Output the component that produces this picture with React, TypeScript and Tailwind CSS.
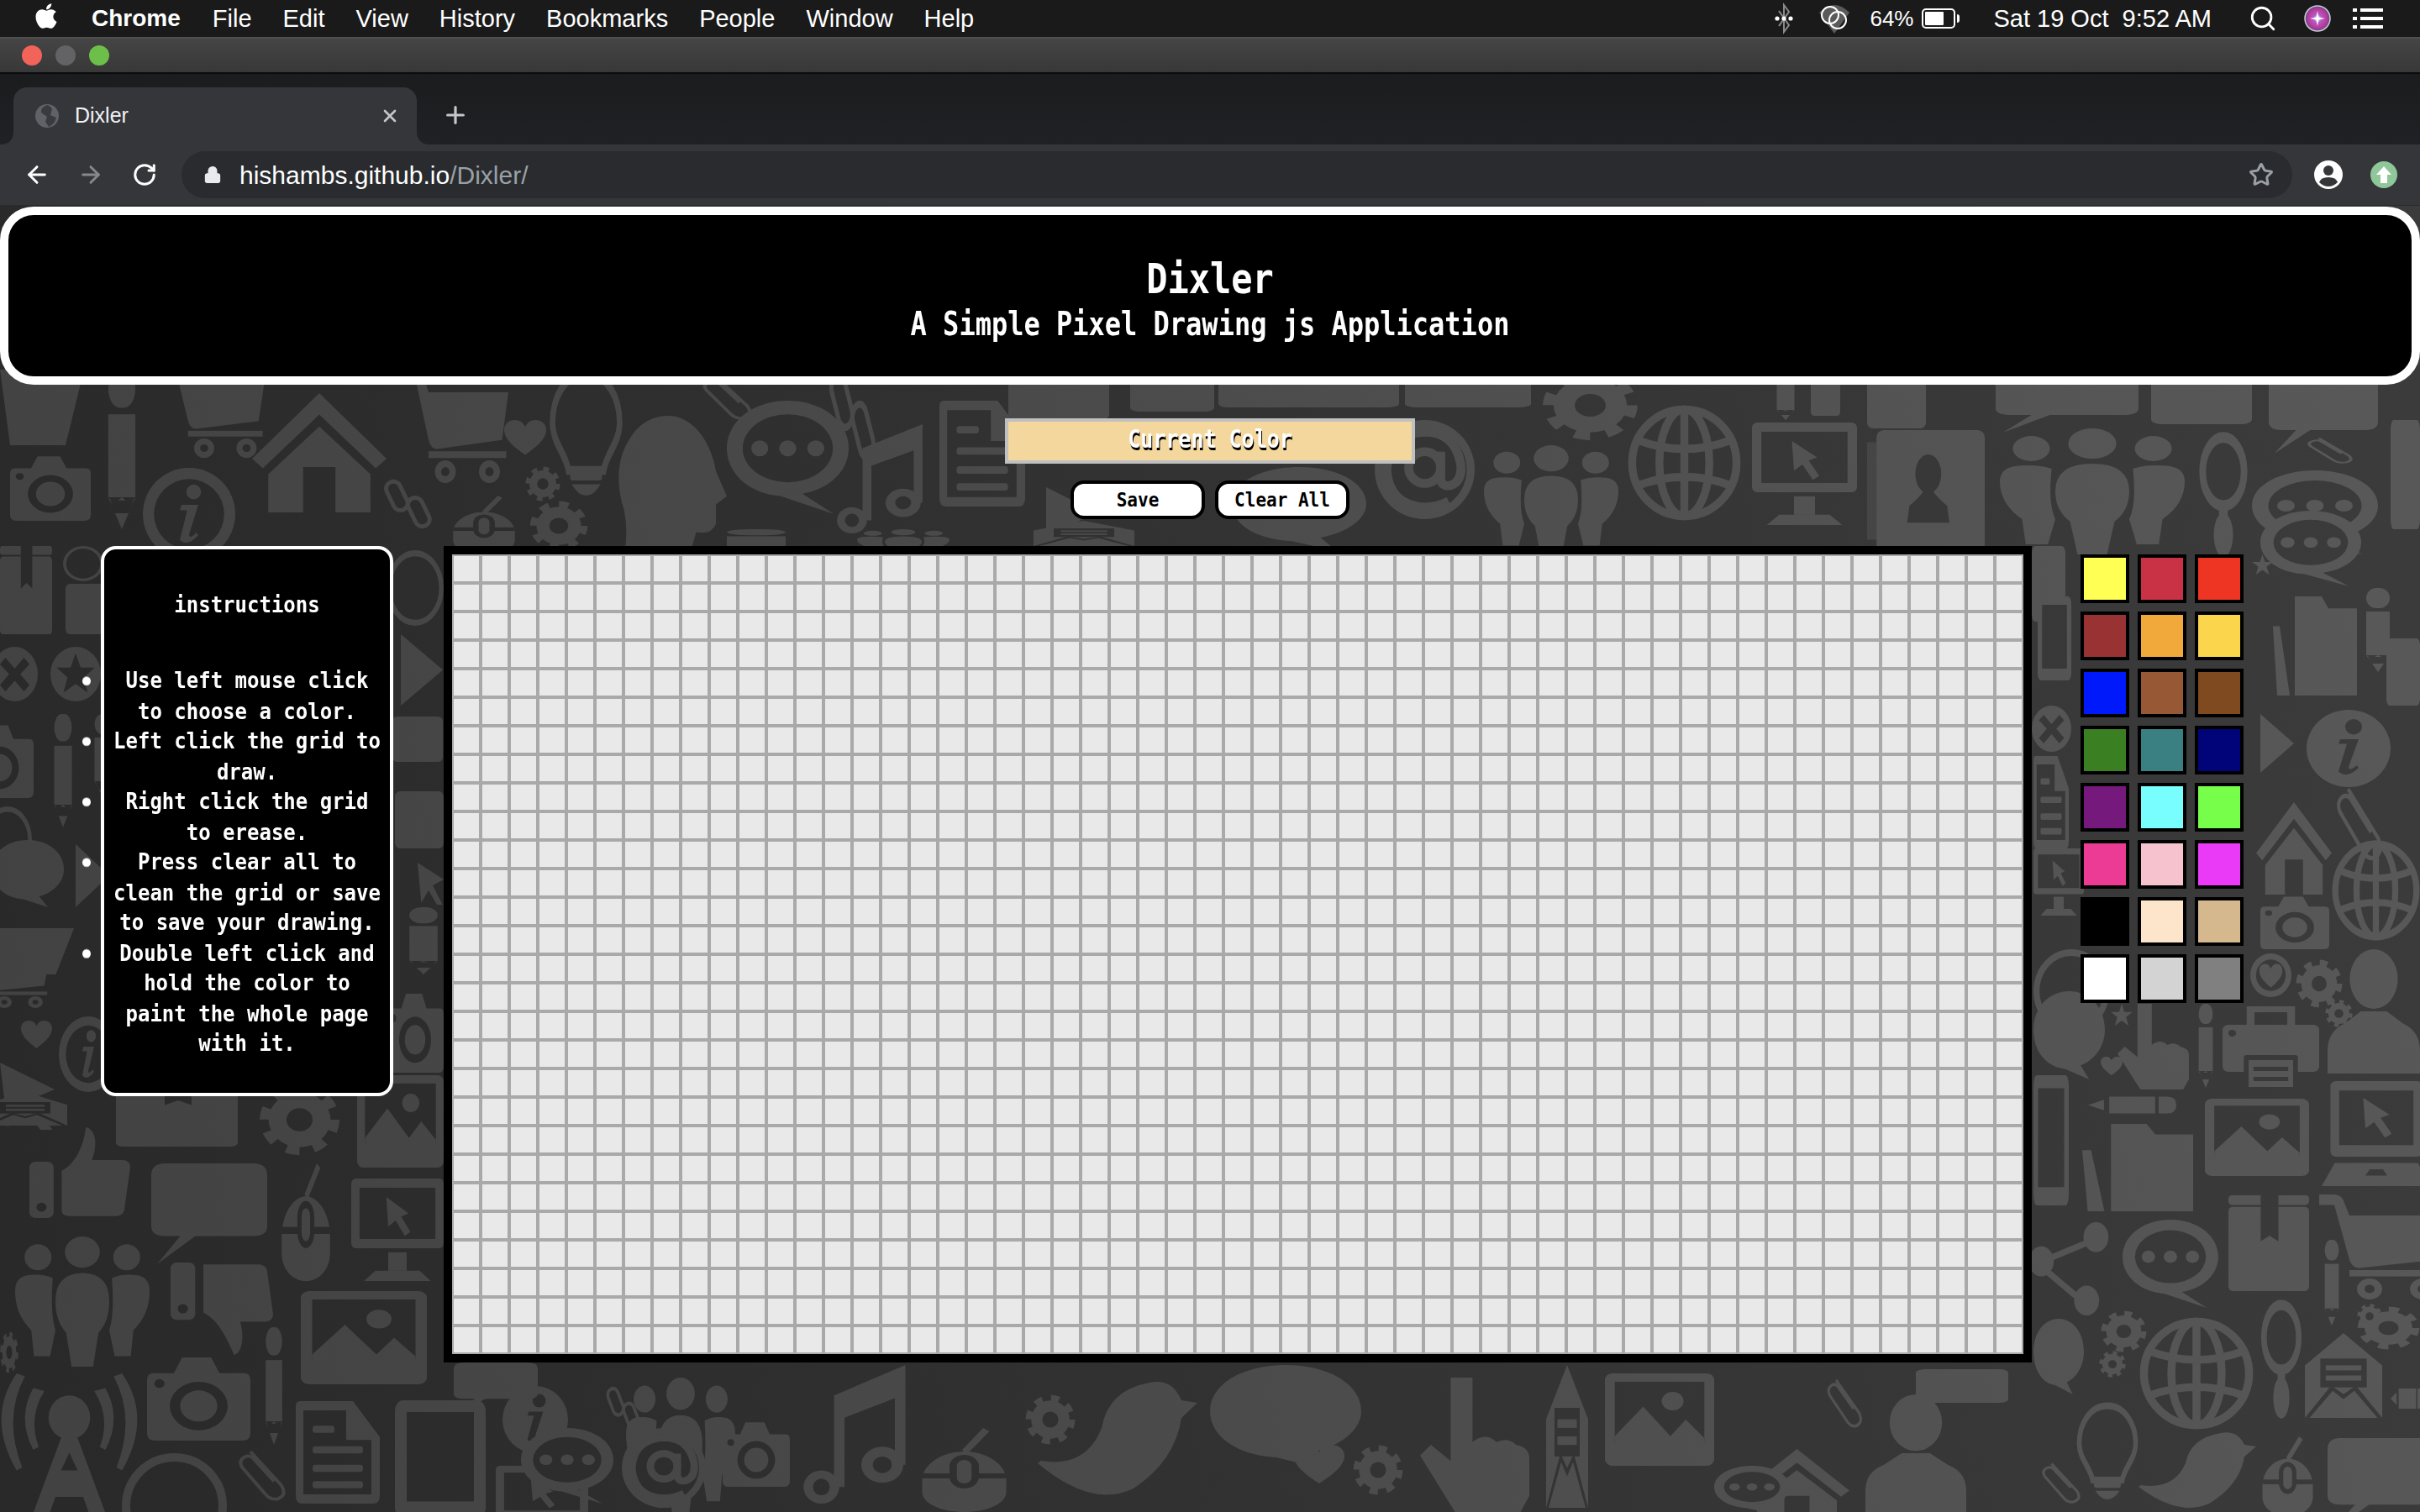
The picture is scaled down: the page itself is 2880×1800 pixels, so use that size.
import React from "react";
import { FaApple } from "react-icons/fa";
import { ArrowLeft, ArrowRight, RotateCw, Lock, Star, X, Plus, Search } from "lucide-react";

const K = "#000";
const symbols: Record<string, React.ReactNode> = {
  house: (<><path d="M50 0 100 55 92 63 50 18 8 63 0 55Z" /><path d="M50 28 88 68V100H62V62H38V100H12V68Z" /></>),
  camera: (<><path d="M6 22H26L34 4H62L70 22H94Q100 22 100 30V92Q100 100 92 100H8Q0 100 0 92V30Q0 22 6 22Z" /><circle cx="50" cy="60" r="28" fill={K} /><circle cx="50" cy="60" r="18" /><circle cx="12" cy="34" r="5" fill={K} /></>),
  cart: (<><path d="M0 0H12Q18 0 20 8L24 20H100L94 62L32 70Q26 70 24 62L12 10H0Z" /><rect x="24" y="72" width="74" height="6" /><circle cx="40" cy="90" r="10" /><circle cx="82" cy="90" r="10" /><circle cx="40" cy="90" r="4" fill={K} /><circle cx="82" cy="90" r="4" fill={K} /></>),
  bulb: (<><path d="M50 3C24 3 8 22 8 42C8 58 24 66 28 80H72C76 66 92 58 92 42C92 22 76 3 50 3Z" fill="none" stroke="#fff" strokeWidth="7" /><rect x="30" y="82" width="40" height="6" rx="3" /><path d="M32 91H68Q60 100 50 100Q40 100 32 91Z" /></>),
  dots: (<><path d="M50 0C78 0 100 18 100 42C100 62 84 78 62 82L88 100L44 84C18 82 0 64 0 42C0 18 22 0 50 0Z" /><ellipse cx="50" cy="42" rx="37" ry="30" fill={K} /><circle cx="27" cy="42" r="7" /><circle cx="50" cy="42" r="7" /><circle cx="73" cy="42" r="7" /></>),
  bubble: (<path d="M12 0H88Q100 0 100 12V62Q100 72 88 72H38L5 100L25 72H12Q0 72 0 62V12Q0 0 12 0Z" />),
  oval: (<path d="M50 0C78 0 100 18 100 44C100 62 86 78 66 84L78 100L44 88C18 86 0 68 0 44C0 18 22 0 50 0Z" />),
  note: (<><path d="M30 22 98 0V72H88V24L40 38V88H30Z" /><ellipse cx="18" cy="88" rx="17" ry="12" /><ellipse cx="76" cy="72" rx="20" ry="13" /><ellipse cx="18" cy="88" rx="8" ry="6" fill={K} /><ellipse cx="76" cy="72" rx="9" ry="6" fill={K} /></>),
  doc: (<><path d="M5 0H68L100 35V92Q100 100 92 100H8Q0 100 0 92V5Q0 0 5 0Z" /><path d="M9 9H60V38H90V91H9Z" fill={K} /><g><rect x="20" y="24" width="26" height="7" rx="3" /><rect x="20" y="44" width="60" height="7" rx="3" /><rect x="20" y="62" width="60" height="7" rx="3" /><rect x="20" y="78" width="60" height="7" rx="3" /></g></>),
  globe: (<g fill="none" stroke="#fff" strokeWidth="7"><circle cx="50" cy="50" r="46" /><ellipse cx="50" cy="50" rx="22" ry="46" /><path d="M8 30Q50 46 92 30M8 70Q50 54 92 70M50 4V96" /></g>),
  people: (<><circle cx="17" cy="16" r="10" /><ellipse cx="50" cy="12" rx="13" ry="12" /><circle cx="83" cy="16" r="10" /><path d="M8 30Q20 28 28 32Q26 60 30 72L26 92H14L12 72Q0 60 0 42Q0 32 8 30Z" /><path d="M92 30Q80 28 72 32Q74 60 70 72L74 92H86L88 72Q100 60 100 42Q100 32 92 30Z" /><path d="M50 28Q70 28 70 50Q70 65 62 74L58 100H42L38 74Q30 65 30 50Q30 28 50 28Z" /></>),
  monitor: (<><rect x="0" y="0" width="100" height="68" rx="5" /><rect x="9" y="9" width="82" height="50" fill={K} /><path d="M38 18 62 34 54 37 64 52 58 56 48 41 40 47Z" /><rect x="40" y="72" width="20" height="18" /><path d="M14 100 26 90H74L86 100Z" /></>),
  mouse: (<><path d="M68 0 74 4 52 32 48 26Z" /><path d="M50 28C72 28 90 44 90 62V76C90 90 72 100 50 100C28 100 10 90 10 76V62C10 44 28 28 50 28Z" /><rect x="10" y="54" width="80" height="6" fill={K} /><rect x="36" y="32" width="28" height="40" rx="14" fill={K} /><rect x="43" y="38" width="14" height="28" rx="7" /></>),
  thumbUp: (<><rect x="0" y="38" width="24" height="62" rx="6" /><circle cx="12" cy="88" r="5" fill={K} /><path d="M32 48C46 40 54 20 56 0C66 2 68 20 62 36H92Q100 36 100 44L94 92Q92 98 86 98H40Q32 98 32 92Z" /></>),
  thumbDown: (<><rect x="0" y="0" width="24" height="62" rx="6" /><circle cx="12" cy="50" r="5" fill={K} /><path d="M32 2H86Q92 2 94 8L100 56Q100 64 92 64H68C72 80 70 98 62 100C54 80 46 62 32 54Z" /></>),
  picture: (<><rect x="0" y="0" width="100" height="100" rx="7" /><rect x="9" y="9" width="82" height="66" fill={K} /><circle cx="62" cy="30" r="10" /><path d="M9 68 35 36 60 68 74 50 91 70V91H9Z" /></>),
  pencil: (<><rect x="15" y="0" width="70" height="24" rx="30" /><rect x="15" y="28" width="70" height="52" /><path d="M15 80 30 84 50 80 70 84 85 80 50 100Z" /><path d="M20 82H80L70 90H30Z" fill={K} /></>),
  pencilH: (<><path d="M0 50 18 25V75Z" /><rect x="24" y="10" width="52" height="80" /><path d="M80 10H90Q100 10 100 50Q100 90 90 90H80Z" /></>),
  clip: (<path d="M30 5 85 70Q95 88 80 95Q66 100 55 85L15 35Q8 22 20 15Q30 10 38 22L72 62" fill="none" stroke="#fff" strokeWidth="6" />),
  info: (<><circle cx="50" cy="50" r="50" /><circle cx="50" cy="50" r="38" fill={K} /><circle cx="55" cy="26" r="8" /><path d="M42 40H60L50 72Q50 78 58 70L60 73Q48 86 40 78L48 46H40Z" /></>),
  infoS: (<><circle cx="50" cy="50" r="50" /><circle cx="56" cy="22" r="10" fill={K} /><path d="M40 38H62L50 74Q50 80 60 72L62 75Q48 90 38 80L48 44H38Z" fill={K} /></>),
  gear: (<><circle cx="50" cy="50" r="38" /><circle cx="50" cy="50" r="42" fill="none" stroke="#fff" strokeWidth="14" strokeDasharray="16 17" /><circle cx="50" cy="50" r="16" fill={K} /></>),
  printer: (<><rect x="25" y="0" width="50" height="30" /><rect x="33" y="7" width="34" height="16" fill={K} /><rect x="0" y="22" width="100" height="56" rx="6" /><circle cx="10" cy="32" r="4" fill={K} /><rect x="22" y="58" width="56" height="42" rx="3" fill={K} /><rect x="27" y="64" width="46" height="32" /><rect x="32" y="72" width="36" height="5" fill={K} /><rect x="32" y="84" width="36" height="5" fill={K} /></>),
  folder: (<><path d="M0 30H8L20 100H5Z" /><path d="M26 0H58L66 12H100V100H26Z" /></>),
  box: (<><rect x="0" y="12" width="100" height="88" rx="5" /><rect x="0" y="0" width="100" height="10" rx="4" /><path d="M40 0H62V48L51 42 40 48Z" fill={K} /></>),
  magnifier: (<><circle cx="50" cy="32" r="28" fill="none" stroke="#fff" strokeWidth="9" /><rect x="44" y="60" width="12" height="8" /><ellipse cx="50" cy="84" rx="13" ry="18" /></>),
  mail: (<><path d="M50 0 100 38V100H0V38Z" /><rect x="20" y="30" width="60" height="34" fill={K} /><rect x="27" y="38" width="46" height="6" /><rect x="27" y="50" width="46" height="6" /><path d="M0 100 34 62 50 72 66 62 100 100H94L64 68 50 78 36 68 6 100Z" fill={K} /></>),
  heart: (<path d="M50 92C10 62 0 42 0 26C0 8 14 0 26 0C38 0 46 8 50 18C54 8 62 0 74 0C86 0 100 8 100 26C100 42 90 62 50 92Z" />),
  star: (<path d="M50 0 62 36H100L70 58 81 96 50 74 19 96 30 58 0 36H38Z" />),
  starC: (<><circle cx="50" cy="50" r="50" /><path d="M50 12 60 38H88L66 56 74 84 50 68 26 84 34 56 12 38H40Z" fill={K} /></>),
  closeC: (<><circle cx="50" cy="50" r="50" /><path d="M30 20 50 40 70 20 82 32 62 50 82 70 70 82 50 62 30 82 18 70 38 50 18 32Z" fill={K} /></>),
  heartC: (<><circle cx="50" cy="50" r="50" /><circle cx="50" cy="50" r="36" fill={K} /><path d="M50 78C26 60 22 48 22 38C22 28 30 24 36 24C44 24 48 30 50 36C52 30 56 24 64 24C70 24 78 28 78 38C78 48 74 60 50 78Z" /></>),
  tablet: (<><rect x="0" y="0" width="100" height="100" rx="9" /><rect x="13" y="10" width="74" height="76" fill={K} /></>),
  person: (<><ellipse cx="50" cy="24" rx="26" ry="24" /><path d="M0 100V82Q0 66 18 60L36 50H64L82 60Q100 66 100 82V100Z" /></>),
  laptop: (<><rect x="8" y="0" width="84" height="72" rx="5" /><rect x="16" y="9" width="68" height="52" fill={K} /><path d="M38 16 62 32 54 35 64 50 58 54 48 39 40 45Z" /><path d="M12 78H88L100 100H0Z" /><path d="M40 90 44 84H56L60 90Z" fill={K} /></>),
  hand: (<path d="M28 0H48V48Q60 40 70 48Q80 44 88 50Q100 52 100 60V88L92 100H32L0 58 10 50 28 62Z" />),
  antenna: (<><circle cx="50" cy="30" r="15" /><path d="M44 44H56L78 100H66L60 84H40L34 100H22Z" /><path d="M44 66H56L50 54Z" fill={K} /><path d="M24 10Q12 30 24 52L28 50Q20 30 32 12ZM76 10Q88 30 76 52L72 50Q80 30 68 12ZM12 0Q-10 30 12 66L16 64Q2 30 18 2ZM88 0Q110 30 88 66L84 64Q98 30 82 2Z" /></>),
  bird: (<path d="M2 66Q30 72 40 40Q44 10 70 4Q84 0 90 18L100 20L90 32Q86 66 60 88Q34 104 0 68Z" />),
  link: (<g fill="none" stroke="#fff" strokeWidth="8"><rect x="14" y="4" width="28" height="60" rx="14" transform="rotate(-25 28 34)" /><rect x="56" y="36" width="28" height="60" rx="14" transform="rotate(-25 70 66)" /></g>),
  at: (<><circle cx="50" cy="50" r="50" /><circle cx="50" cy="50" r="42" fill={K} /><g fill="none" stroke="#fff" strokeWidth="9"><circle cx="50" cy="48" r="16" /><path d="M66 32V58Q66 68 76 66Q88 62 86 44Q80 12 50 12Q14 14 12 50Q14 86 50 88Q62 88 74 82" /></g></>),
  head: (<path d="M46 0C70 0 86 20 90 40L100 58 90 64V78Q86 86 72 84L66 100H6Q10 84 6 68C-2 50 0 30 10 18C18 6 32 0 46 0Z" />),
  network: (<><circle cx="80" cy="16" r="16" /><circle cx="68" cy="84" r="16" /><circle cx="10" cy="42" r="16" /><path d="M18 36 70 18 73 24 22 42ZM14 46 62 80 58 86 10 52Z" /></>),
  address: (<><rect x="8" y="0" width="92" height="100" rx="6" /><path d="M0 10H8V90H0Z" fill="#fff" opacity="0.5" /><ellipse cx="52" cy="36" rx="11" ry="16" fill={K} /><path d="M34 76 36 62Q44 56 48 50H56Q60 56 68 62L70 76Z" fill={K} /></>),
  ring: (<g><circle cx="50" cy="50" r="46" fill="none" stroke="#fff" strokeWidth="8" /></g>),
  rect: (<rect x="0" y="0" width="100" height="100" rx="10" />),
  trap: (<path d="M0 0H100L78 100H12Z" />),
  tri: (<path d="M0 0 100 50 0 100Z" />),
  arrow: (<path d="M0 0 100 40 58 54 96 100 74 100 42 66 14 96Z" />),
};

const placed: [string, number, number, number, number][] = [
  ["trap", 0, 440, 100, 90], ["pencil", 122, 440, 46, 190], ["cart", 195, 430, 120, 115], ["camera", 12, 540, 96, 80],
  ["info", 170, 557, 110, 110], ["house", 300, 468, 160, 142], ["cart", 480, 440, 125, 135], ["heart", 600, 500, 50, 45],
  ["bulb", 650, 440, 95, 150], ["gear", 625, 555, 42, 42], ["gear", 630, 596, 70, 60], ["link", 455, 570, 62, 60],
  ["clip", 830, 445, 70, 55], ["link", 985, 440, 60, 110], ["head", 735, 495, 130, 165], ["dots", 865, 477, 145, 135], ["note", 995, 505, 105, 130],
  ["doc", 1118, 477, 102, 126], ["mouse", 530, 590, 92, 70], ["pencil", 850, 630, 100, 30], ["people", 1020, 630, 110, 30],
  ["tri", 1245, 580, 60, 60], ["mail", 1230, 620, 120, 30], ["oval", 1466, 556, 160, 100], ["at", 1636, 500, 119, 118], ["rect", 1200, 440, 120, 60], ["rect", 1345, 440, 100, 50], ["rect", 1450, 440, 110, 45],
  ["rect", 1515, 445, 150, 40], ["rect", 1672, 445, 150, 40], ["gear", 1835, 440, 115, 85], ["people", 1766, 530, 160, 130], ["globe", 1937, 482, 135, 138],
  ["monitor", 2085, 503, 125, 122], ["pencil", 2110, 440, 30, 60], ["rect", 2155, 445, 35, 50], ["rect", 2222, 445, 70, 65], ["bubble", 2375, 440, 170, 75],
  ["address", 2222, 512, 140, 145], ["people", 2380, 510, 220, 150], ["magnifier", 2602, 515, 88, 145], ["dots", 2680, 560, 150, 100], ["clip", 2740, 520, 65, 32], ["bubble", 2700, 440, 130, 100], ["rect", 2560, 445, 120, 60], ["rect", 2845, 500, 35, 130],
  ["box", 0, 650, 62, 105], ["ring", 75, 650, 48, 42], ["rect", 78, 695, 50, 60], ["closeC", -10, 770, 55, 65], ["starC", 60, 770, 60, 65], ["camera", -40, 860, 80, 90], ["pencil", 60, 850, 30, 135], ["pencil", 108, 850, 30, 100],
  ["ring", -20, 960, 58, 80], ["oval", -10, 1000, 86, 80], ["tri", 90, 1005, 40, 75], ["trap", -10, 1105, 98, 55], ["cart", -30, 1130, 88, 70], ["heart", 25, 1215, 37, 36], ["info", 70, 1210, 70, 90], ["arrow", 0, 1265, 65, 80],
  ["ring", 460, 655, 68, 90], ["tri", 477, 755, 50, 85], ["rect", 467, 853, 60, 54], ["rect", 470, 942, 58, 68], ["arrow", 497, 1027, 31, 50], ["camera", 460, 1179, 68, 98], ["pencil", 480, 1080, 48, 80],
  ["mail", -20, 1300, 100, 40], ["box", 138, 1270, 145, 95], ["gear", 308, 1290, 97, 86], ["picture", 425, 1280, 103, 110], ["thumbUp", 35, 1342, 120, 108], ["bubble", 180, 1385, 138, 120], ["mouse", 328, 1385, 72, 140], ["monitor", 418, 1403, 110, 122],
  ["people", 18, 1472, 160, 155], ["thumbDown", 203, 1503, 122, 110], ["picture", 358, 1537, 150, 111], ["pencil", 312, 1580, 28, 140], ["camera", 175, 1612, 123, 103], ["antenna", 0, 1635, 165, 175], ["doc", 352, 1668, 100, 122], ["tablet", 470, 1667, 108, 140], ["infoS", 598, 1650, 78, 80], ["ring", 145, 1730, 125, 125], ["clip", 278, 1725, 67, 62], ["monitor", 590, 1745, 110, 90], ["gear", 0, 1585, 22, 50],
  ["bubble", 540, 1622, 100, 60], ["note", 955, 1625, 125, 165], ["people", 745, 1640, 130, 160], ["dots", 620, 1700, 110, 90], ["link", 720, 1650, 45, 55], ["mouse", 1085, 1700, 125, 100], ["gear", 1220, 1660, 60, 60], ["at", 740, 1700, 100, 95], ["camera", 860, 1690, 80, 80], ["bird", 1235, 1640, 190, 150],
  ["oval", 1440, 1625, 180, 125], ["heart", 1540, 1720, 60, 50], ["gear", 1610, 1720, 60, 60], ["hand", 1690, 1640, 130, 160], ["picture", 1910, 1635, 130, 110], ["mail", 1840, 1625, 50, 170], ["house", 2076, 1725, 125, 90], ["clip", 2170, 1640, 50, 60], ["person", 2220, 1660, 120, 140], ["dots", 2040, 1745, 90, 60], ["rect", 2280, 1630, 110, 40],
  ["rect", 2418, 650, 40, 90], ["tablet", 2425, 710, 40, 100], ["closeC", 2418, 840, 47, 55], ["doc", 2420, 900, 42, 110], ["monitor", 2420, 1010, 60, 80], ["ring", 2420, 1130, 90, 100], ["oval", 2420, 1180, 85, 105],
  ["dots", 2690, 608, 120, 90], ["folder", 2705, 710, 100, 118], ["pencil", 2810, 700, 40, 100], ["infoS", 2745, 845, 100, 92], ["house", 2685, 955, 90, 110], ["clip", 2775, 935, 65, 90], ["camera", 2690, 1065, 82, 65], ["globe", 2775, 1000, 105, 120], ["star", 2680, 660, 25, 25], ["rect", 2840, 760, 40, 80], ["tri", 2690, 850, 40, 70],
  ["star", 2512, 1195, 26, 27], ["hand", 2520, 1195, 85, 102], ["pencil", 2613, 1195, 24, 100], ["printer", 2645, 1198, 115, 100], ["heartC", 2678, 1135, 49, 52], ["gear", 2732, 1142, 56, 58], ["gear", 2767, 1190, 33, 33], ["person", 2770, 1130, 110, 148],
  ["tablet", 2420, 1280, 42, 155], ["heart", 2500, 1258, 26, 24], ["pencilH", 2485, 1303, 105, 25], ["folder", 2478, 1338, 132, 104], ["picture", 2624, 1308, 124, 92], ["laptop", 2763, 1287, 130, 125],
  ["box", 2652, 1423, 96, 114], ["cart", 2760, 1422, 150, 125], ["pencil", 2763, 1476, 24, 102], ["network", 2420, 1455, 93, 111], ["dots", 2526, 1452, 114, 105],
  ["gear", 2500, 1560, 55, 50], ["gear", 2498, 1608, 32, 32], ["globe", 2546, 1568, 136, 134], ["magnifier", 2678, 1548, 74, 138], ["mail", 2743, 1587, 92, 101], ["gear", 2805, 1555, 75, 52], ["gear", 2805, 1552, 30, 30],
  ["bulb", 2468, 1670, 80, 115], ["bird", 2545, 1702, 140, 100], ["mouse", 2685, 1710, 75, 95], ["bubble", 2770, 1712, 130, 110], ["clip", 2425, 1740, 55, 50], ["oval", 2420, 1570, 60, 90], ["pencilH", 2845, 1650, 40, 30],
];

function Background() {
  return (
    <svg className="absolute top-0 left-0" width="2880" height="1800" viewBox="0 0 2880 1800" aria-hidden="true">
      <defs>
        {Object.entries(symbols).map(([id, node]) => (
          <symbol key={id} id={id} viewBox="0 0 100 100" preserveAspectRatio="none" overflow="visible" fill="#fff">{node}</symbol>
        ))}
        <linearGradient id="bgG" gradientUnits="userSpaceOnUse" x1="0" y1="1500" x2="2880" y2="1100">
          <stop offset="0" stopColor="#292929" /><stop offset="0.5" stopColor="#323232" /><stop offset="1" stopColor="#3b3b3b" />
        </linearGradient>
        <linearGradient id="fgG" gradientUnits="userSpaceOnUse" x1="0" y1="1500" x2="2880" y2="1100">
          <stop offset="0" stopColor="#424242" /><stop offset="0.5" stopColor="#4b4b4b" /><stop offset="1" stopColor="#585858" />
        </linearGradient>
        <mask id="iconMask" maskUnits="userSpaceOnUse" x="0" y="0" width="2880" height="1800">
          <rect width="2880" height="1800" fill="#000" />
          {placed.map(([id, x, y, w, h], i) => (
            <use key={i} href={`#${id}`} x={x} y={y} width={w} height={h} />
          ))}
        </mask>
      </defs>
      <rect width="2880" height="1800" fill="url(#bgG)" />
      <rect width="2880" height="1800" fill="url(#fgG)" mask="url(#iconMask)" />
    </svg>
  );
}

const menu = ["File", "Edit", "View", "History", "Bookmarks", "People", "Window", "Help"];

function MenuBar() {
  return (
    <div className="h-[44px] bg-[#1a1a1a] flex items-center text-white text-[29px] font-['Liberation_Sans',sans-serif] leading-none whitespace-pre">
      <FaApple className="ml-[38px] w-[34px] h-[34px] -mt-[6px] text-white" />
      <span className="ml-[37px] font-bold text-[28px]">Chrome</span>
      <div className="ml-[38px] flex gap-[37px]">
        {menu.map((m) => <span key={m}>{m}</span>)}
      </div>
      <div className="ml-auto flex items-center">
        <svg width="24" height="40" viewBox="0 0 24 40" fill="none" stroke="#8a8a8a" strokeWidth="2">
          <path d="M6 11 18 28 12 36V4L18 12 6 29" />
          <circle cx="4" cy="20" r="2.6" fill="#fff" stroke="none" /><circle cx="12" cy="20" r="2.6" fill="#fff" stroke="none" /><circle cx="20" cy="20" r="2.6" fill="#fff" stroke="none" />
        </svg>
        <svg className="ml-[28px]" width="40" height="38" viewBox="0 0 40 38" fill="none">
          <path d="M2 12Q20 -6 38 12L20 37Z" fill="#5a5a5a" />
          <circle cx="15" cy="15" r="10" stroke="#fff" strokeWidth="2" /><circle cx="24" cy="21" r="10" stroke="#fff" strokeWidth="2" />
        </svg>
        <span className="ml-[22px] text-[26px]">64%</span>
        <div className="ml-[10px] flex items-center">
          <div className="w-[40px] h-[24px] border-2 border-white rounded-[5px] p-[2px]"><div className="w-[22px] h-full bg-white rounded-[1px]" /></div>
          <div className="w-[3px] h-[10px] bg-white ml-[2px] rounded-r" />
        </div>
        <span className="ml-[40px]">{"Sat 19 Oct  9:52 AM"}</span>
        <Search className="ml-[44px] w-[34px] h-[34px]" strokeWidth={2} color="#fff" />
        <svg className="ml-[32px]" width="32" height="32" viewBox="0 0 32 32">
          <defs>
            <radialGradient id="siri" cx="0.5" cy="0.5" r="0.55"><stop offset="0" stopColor="#ffffff" /><stop offset="0.3" stopColor="#b05cc8" /><stop offset="0.65" stopColor="#c23a96" /><stop offset="1" stopColor="#2c4fa8" /></radialGradient>
          </defs>
          <circle cx="16" cy="16" r="15" fill="url(#siri)" stroke="#ccc" strokeWidth="1.5" />
          <path d="M16 7 17.5 14.5 25 16 17.5 17.5 16 25 14.5 17.5 7 16 14.5 14.5Z" fill="#fff" />
        </svg>
        <svg className="ml-[26px] mr-[44px]" width="36" height="26" viewBox="0 0 36 26" fill="#fff">
          <rect y="1" width="5" height="4" /><rect x="9" y="1" width="27" height="4" /><rect y="11" width="5" height="4" /><rect x="9" y="11" width="27" height="4" /><rect y="21" width="5" height="4" /><rect x="9" y="21" width="27" height="4" />
        </svg>
      </div>
    </div>
  );
}

function TitleBar() {
  return (
    <div className="h-[44px] border-t-2 border-b-2 border-t-[#4f4f4f] border-b-[#0c0c0c] bg-[linear-gradient(#454545,#383838)] flex items-center pl-[26px] gap-[16px]">
      <div className="w-[24px] h-[24px] rounded-full bg-[#f2635a]" />
      <div className="w-[24px] h-[24px] rounded-full bg-[#636366]" />
      <div className="w-[24px] h-[24px] rounded-full bg-[#6cc04a]" />
    </div>
  );
}

function TabStrip() {
  return (
    <div className="h-[84px] bg-[linear-gradient(#1b1c1e,#202124)] flex items-end pl-[16px]">
      <div className="relative w-[480px] h-[68px] bg-[#35363a] rounded-t-[16px] flex items-center pl-[26px] pr-[20px] font-['Liberation_Sans',sans-serif] text-[25px] text-[#f1f3f4]">
        <svg className="absolute -left-[16px] bottom-0" width="16" height="16" viewBox="0 0 16 16"><path d="M16 0V16H0Q16 16 16 0Z" fill="#35363a" /></svg>
        <svg className="absolute -right-[16px] bottom-0" width="16" height="16" viewBox="0 0 16 16"><path d="M0 0V16H16Q0 16 0 0Z" fill="#35363a" /></svg>
        <svg width="28" height="28" viewBox="0 0 28 28">
          <circle cx="14" cy="14" r="14" fill="#5f6368" />
          <path d="M14 1Q6 4 7 10L14 15 12 21 16 27Q23 24 25 16L18 13 20 6Q18 2 14 1Z" fill="#3a3b3f" />
        </svg>
        <span className="ml-[19px]">Dixler</span>
        <X className="ml-auto w-[24px] h-[24px]" color="#c4c7ca" strokeWidth={2.6} />
      </div>
      <Plus className="ml-[30px] mb-[19px] w-[32px] h-[32px]" color="#c4c7ca" strokeWidth={2.4} />
    </div>
  );
}

function Toolbar() {
  return (
    <div className="h-[73px] bg-[#35363a] border-b border-[#2a2b2e] flex items-start pt-[8px]">
      <div className="w-[216px] h-[56px] flex items-center pl-[28px] gap-[32px]">
        <ArrowLeft className="w-[32px] h-[32px]" color="#fff" strokeWidth={2.2} />
        <ArrowRight className="w-[32px] h-[32px]" color="#85888c" strokeWidth={2.2} />
        <RotateCw className="w-[30px] h-[30px] ml-[1px]" color="#fff" strokeWidth={2.4} />
      </div>
      <div className="w-[2512px] h-[56px] bg-[#292b2e] rounded-full flex items-center pl-[26px] pr-[22px] font-['Liberation_Sans',sans-serif] text-[30px]">
        <Lock className="w-[22px] h-[24px]" color="#e8eaed" fill="#e8eaed" strokeWidth={2} />
        <span className="ml-[21px] text-white">hishambs.github.io<span className="text-[#9aa0a6]">/Dixler/</span></span>
        <Star className="ml-auto w-[30px] h-[30px]" color="#9aa0a6" strokeWidth={2.4} />
      </div>
      <div className="flex-1 h-[56px] flex items-center pl-[26px] gap-[33px]">
        <svg width="34" height="34" viewBox="0 0 34 34">
          <circle cx="17" cy="17" r="17" fill="#fff" /><circle cx="17" cy="12" r="6" fill="#35363a" /><path d="M6 26Q8 20 17 20Q26 20 28 26Q23 31 17 31Q11 31 6 26Z" fill="#35363a" />
        </svg>
        <svg width="32" height="32" viewBox="0 0 32 32">
          <circle cx="16" cy="16" r="16" fill="#8fc79b" /><path d="M16 6 25 16H20V26H12V16H7Z" fill="#fff" />
        </svg>
      </div>
    </div>
  );
}

const mono = "font-['DejaVu_Sans_Mono',monospace] font-bold";

function Header() {
  return (
    <header className={`${mono} mt-px h-[212px] border-[10px] border-white rounded-[40px] bg-black text-white text-center pt-[49px]`}>
      <h1 className="text-[42px] leading-[54px] scale-y-[1.2]">Dixler</h1>
      <h2 className="text-[32px] leading-[54px] scale-y-[1.2]">A Simple Pixel Drawing js Application</h2>
    </header>
  );
}

const items = [
  "Use left mouse click to choose a color.",
  "Left click the grid to draw.",
  "Right click the grid to erease.",
  "Press clear all to clean the grid or save to save your drawing.",
  "Double left click and hold the color to paint the whole page with it.",
];

function Instructions() {
  return (
    <aside className={`${mono} w-[348px] h-[655px] shrink-0 border-4 border-white rounded-[18px] bg-black text-white text-center text-[24px] pt-[48px] px-[6px]`}>
      <h3 className="leading-[36px] scale-y-[1.14]">instructions</h3>
      <ul className="mt-[55px] list-none leading-[31.5px] scale-y-[1.143] origin-top">
        {items.map((t) => (
          <li key={t} className="relative before:content-[''] before:absolute before:-left-[32px] before:top-[11px] before:w-[10px] before:h-[9px] before:rounded-full before:bg-white">{t}</li>
        ))}
      </ul>
    </aside>
  );
}

function PixelGrid() {
  return (
    <div className="w-[1890px] h-[972px] shrink-0 border-[10px] border-black grid grid-cols-[repeat(55,34px)] auto-rows-[34px]">
      {Array.from({ length: 55 * 28 }, (_, i) => (
        <div key={i} className="border-2 border-[#a9a9a9] bg-[#e9e9e9]" />
      ))}
    </div>
  );
}

const colors = [
  "#ffff54", "#c93145", "#ee3524",
  "#993333", "#f2a93b", "#fbd54b",
  "#0019fb", "#965835", "#7f4a20",
  "#3a7f22", "#3a7f82", "#000478",
  "#751a7c", "#78fefe", "#77fe4b",
  "#ec3b94", "#f6c2cd", "#ea3af7",
  "#000000", "#fce5cb", "#d6b88f",
  "#ffffff", "#d3d3d3", "#808080",
];

function Palette() {
  return (
    <div className="mt-[10px] grid grid-cols-[repeat(3,58px)] auto-rows-[58px] gap-[10px]">
      {colors.map((c) => (
        <div key={c} className="border-4 border-black" style={{ backgroundColor: c }} />
      ))}
    </div>
  );
}

export default function App() {
  return (
    <div className="relative w-[2880px] h-[1800px] overflow-hidden bg-[#2f2f2f]">
      <Background />
      <div className="relative flex flex-col">
        <MenuBar />
        <TitleBar />
        <TabStrip />
        <Toolbar />
        <Header />
        <div className={`${mono} mt-[40px] mx-auto w-[488px] h-[54px] border-4 border-[#c0c0c0] bg-[#f3d79c] flex items-center justify-center text-white text-[25px] [text-shadow:1px_3px_0_#000]`}>
          <span className="scale-y-[1.2] -mt-[4px]">Current Color</span>
        </div>
        <div className={`${mono} mt-[20px] flex justify-center gap-[12px] text-[21px] text-black`}>
          <button className="w-[160px] h-[46px] border-4 border-black rounded-[16px] bg-white"><span className="inline-block scale-y-[1.12] translate-y-[1px]">Save</span></button>
          <button className="w-[160px] h-[46px] border-4 border-black rounded-[16px] bg-white"><span className="inline-block scale-y-[1.12] translate-y-[1px]">Clear All</span></button>
        </div>
        <main className="mt-[32px] pl-[120px] flex items-start">
          <Instructions />
          <div className="ml-[60px]"><PixelGrid /></div>
          <div className="ml-[58px]"><Palette /></div>
        </main>
      </div>
    </div>
  );
}
